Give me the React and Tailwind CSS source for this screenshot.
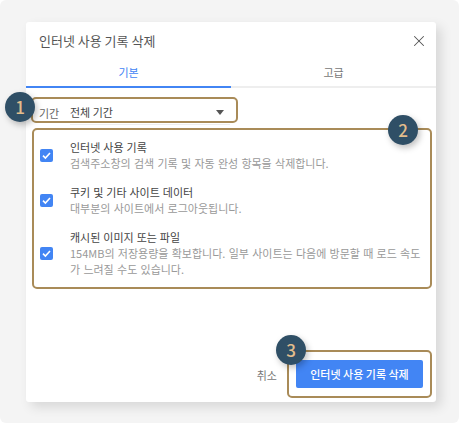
import React from "react";
import { X } from "lucide-react";

const items = [
  {
    title: "인터넷 사용 기록",
    desc: ["검색주소창의 검색 기록 및 자동 완성 항목을 삭제합니다."],
  },
  {
    title: "쿠키 및 기타 사이트 데이터",
    desc: ["대부분의 사이트에서 로그아웃됩니다."],
  },
  {
    title: "캐시된 이미지 또는 파일",
    desc: [
      "154MB의 저장용량을 확보합니다. 일부 사이트는 다음에 방문할 때 로드 속도",
      "가 느려질 수도 있습니다.",
    ],
  },
];

function Check() {
  return (
    <span className="flex h-[13px] w-[13px] shrink-0 items-center justify-center rounded-[2px] bg-[#4285f4]">
      <svg width="11" height="11" viewBox="0 0 11 11" fill="none">
        <path d="M2 5.6 4.4 8 9 3" stroke="#fff" strokeWidth="1.6" />
      </svg>
    </span>
  );
}

function Badge({ className, children }) {
  return (
    <div
      className={`absolute flex h-[30px] w-[30px] items-center justify-center rounded-full bg-[#2f4f66] text-[17px] font-medium text-[#e2bd8c] shadow-[2px_3px_6px_rgba(0,0,0,0.25)] ${className}`}
    >
      {children}
    </div>
  );
}

export default function App() {
  return (
    <div className="relative h-[423px] w-[459px] overflow-hidden rounded-[6px] bg-[#f4f4f4] px-[26px] pt-[22px] font-['Noto_Sans_CJK_KR','Noto_Sans',sans-serif]">
      <div className="flex h-[380px] w-[410px] flex-col rounded-[3px] bg-white shadow-[5px_5px_12px_rgba(0,0,0,0.12)]">
        <div className="flex h-[36px] items-center justify-between pl-[13px] pr-[8px] pt-[1px]">
          <span className="text-[13px] text-[#555]">인터넷 사용 기록 삭제</span>
          <X size={18} strokeWidth={1.4} className="text-[#555]" />
        </div>
        <div className="flex h-[30px] border-b-2 border-[#eeeeee] text-[11px] text-[#777]">
          <div className="-mb-[2px] flex w-[205px] items-center justify-center border-b-2 border-[#4285f4] text-[#4285f4]">
            기본
          </div>
          <div className="flex flex-1 items-center justify-center">고급</div>
        </div>
        <div className="mt-[13px] flex h-[24px] items-center pl-[13px] text-[11px] text-[#666]">
          <span className="w-[31px]">기간</span>
          <div className="flex h-[24px] w-[160px] items-center justify-between border-b border-[#eeeeee] pr-[6px] text-[#444]">
            <span>전체 기간</span>
            <span className="h-0 w-0 border-x-[4px] border-t-[5px] border-x-transparent border-t-[#555]" />
          </div>
        </div>
        <div className="mt-[14px] flex flex-col gap-[13px] pl-[14px]">
          {items.map((item) => (
            <label key={item.title} className="flex items-center">
              <Check />
              <div className="pl-[17px]">
                <div className="text-[11px] leading-[16px] text-[#444] [word-spacing:0.5px]">{item.title}</div>
                {item.desc.map((line) => (
                  <div key={line} className="whitespace-nowrap text-[11px] leading-[16px] text-[#999] [word-spacing:0.8px]">
                    {line}
                  </div>
                ))}
              </div>
            </label>
          ))}
        </div>
        <div className="mt-auto flex items-center justify-end gap-[19px] pb-[14px] pr-[13px]">
          <span className="pt-[2px] text-[11px] text-[#777]">취소</span>
          <button className="h-[28px] w-[127px] rounded-[2px] bg-[#4285f4] text-[11px] font-medium text-white">
            인터넷 사용 기록 삭제
          </button>
        </div>
      </div>

      <div className="absolute left-[31px] top-[97px] h-[26px] w-[207px] rounded-[5px] border-2 border-[#a98b58]" />
      <div className="absolute left-[32px] top-[128px] h-[161px] w-[400px] rounded-[5px] border-2 border-[#a98b58]" />
      <div className="absolute left-[287px] top-[350px] h-[48px] w-[145px] rounded-[5px] border-2 border-[#a98b58]" />
      <Badge className="left-[5px] top-[92px]">1</Badge>
      <Badge className="left-[388px] top-[115px]">2</Badge>
      <Badge className="left-[276px] top-[335px]">3</Badge>
    </div>
  );
}
